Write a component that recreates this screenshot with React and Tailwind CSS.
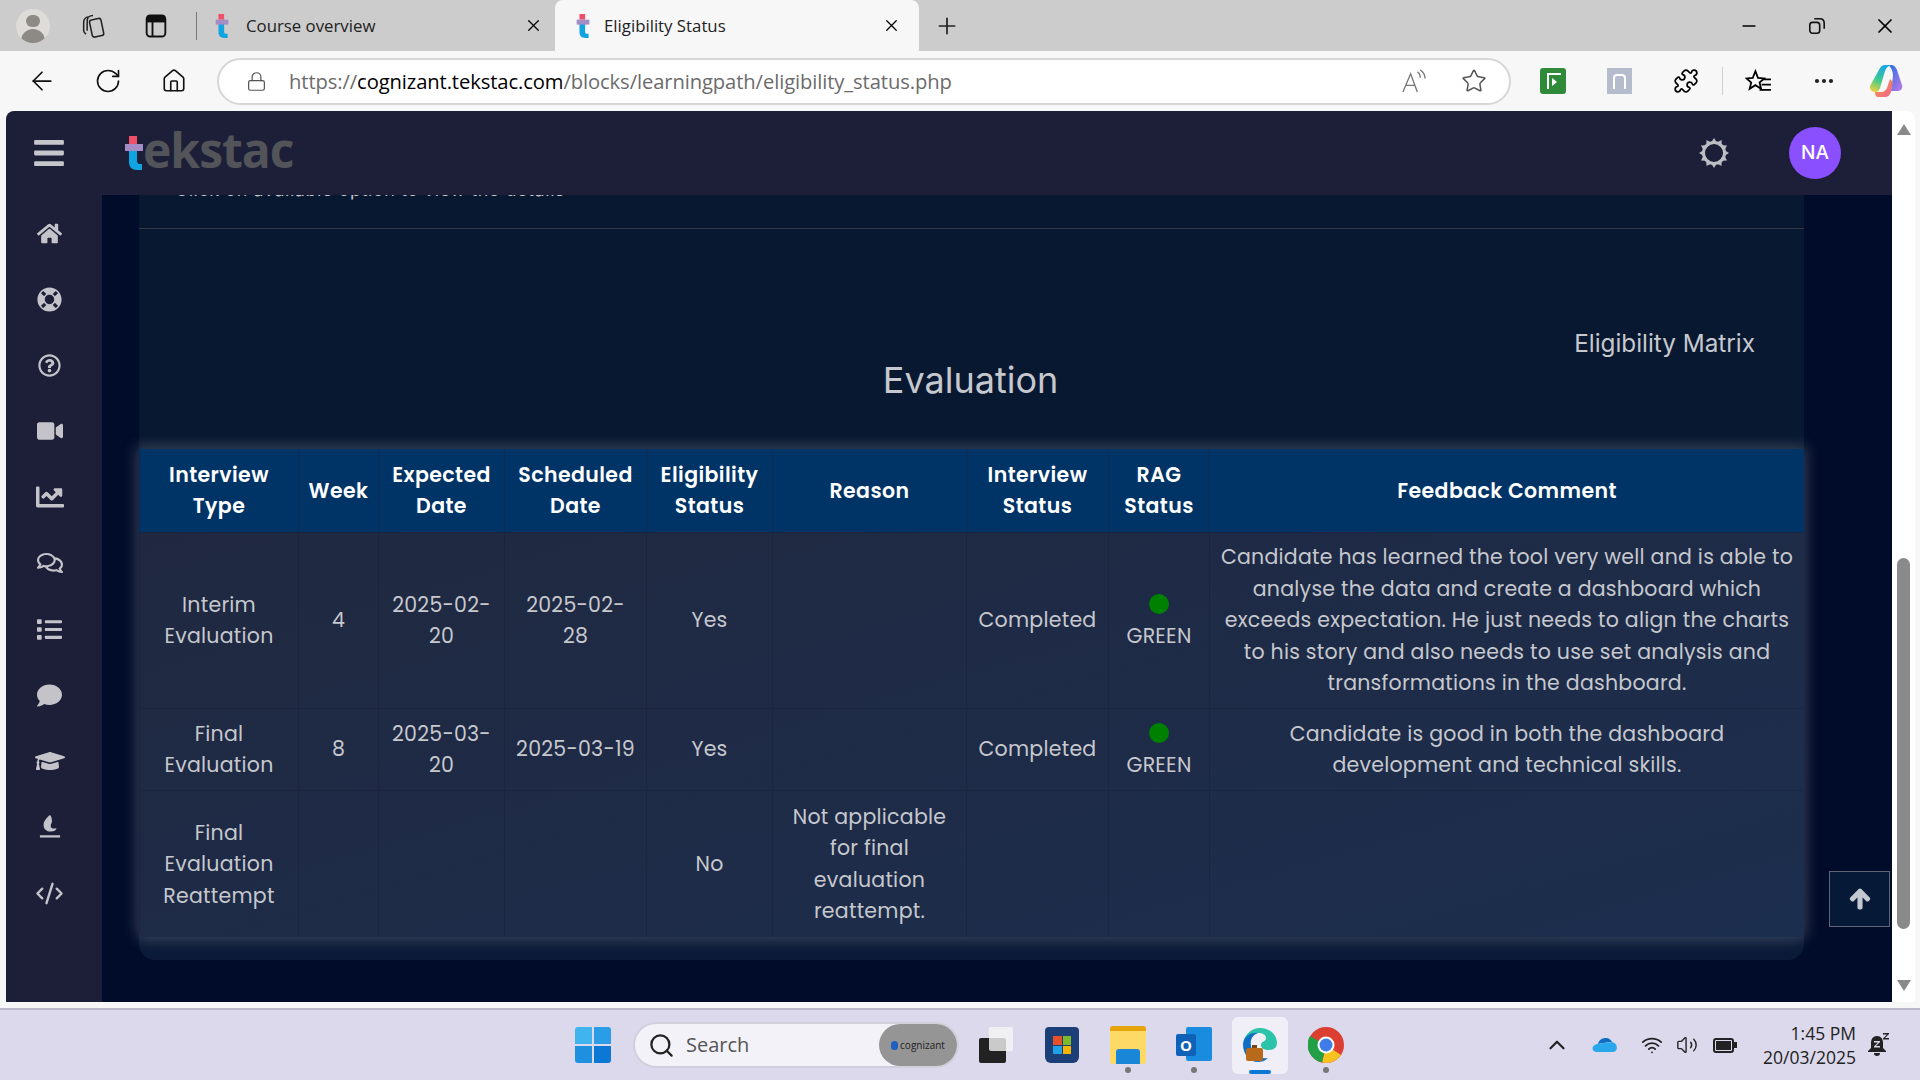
import {
  FaHome,
  FaLifeRing,
  FaRegQuestionCircle,
  FaVideo,
  FaChartLine,
  FaRegComments,
  FaList,
  FaComment,
  FaGraduationCap,
  FaArrowUp,
  FaBars,
} from 'react-icons/fa'
import {
  X,
  Plus,
  ArrowLeft,
  RotateCw,
  Home,
  Lock,
  Star,
  Puzzle,
  MoreHorizontal,
  Minus,
  Search,
  ChevronUp,
  Wifi,
  Volume2,
  CodeXml,
} from 'lucide-react'

const UI_FONT = "font-['Open_Sans',sans-serif]"

function TekMark({ className }) {
  return (
    <svg viewBox="0 0 20 34" className={className}>
      <rect x="5" y="0" width="8" height="8" fill="#ef5068" />
      <path d="M5 13h8v12c0 2 1 3 3 3h2v6h-5c-5 0-8-3-8-8z" fill="#10a5e0" />
      <rect x="1" y="8" width="18" height="7" fill="#a48cc4" />
    </svg>
  )
}

function BrowserTab({ title, active }) {
  return (
    <div
      className={
        active
          ? 'flex h-full w-[364px] items-center rounded-t-lg bg-[#f7f7f7] pl-[20px] pr-[18px]'
          : 'flex h-full w-[358px] items-center pl-[17px] pr-[12px]'
      }
    >
      <TekMark className="h-[24px] w-[16px]" />
      <span className={active ? 'ml-[13px] flex-1 text-[16.800px] text-[#222]' : 'ml-[16px] flex-1 text-[16.800px] text-[#222]'}>
        {title}
      </span>
      <X size={19} strokeWidth={1.6} className="text-black" />
    </div>
  )
}

function TabBar() {
  return (
    <div className={`flex h-[51px] items-center bg-[#cccccc] ${UI_FONT}`}>
      <div className="ml-[16px] flex h-[34px] w-[34px] flex-col items-center overflow-hidden rounded-full bg-[#dedcd8]">
        <div className="mt-[6px] h-[14px] w-[14px] rounded-full bg-[#8d8985]" />
        <div className="mt-[2px] h-[16px] w-[24px] rounded-t-full bg-[#8d8985]" />
      </div>
      <svg viewBox="0 0 24 24" className="ml-[29px] h-[28px] w-[28px]" fill="none" stroke="#222" strokeWidth="1.3">
        <rect x="10" y="6" width="10" height="15" rx="2" transform="rotate(-12 15 13)" />
        <path d="M9 4c-3 0-5 2-5 5v7c0 1 1 2 2 3M12 3c-3 0-5 2-5 5v8" />
      </svg>
      <svg viewBox="0 0 24 24" className="ml-[35px] h-[28px] w-[28px]" fill="none" stroke="#111" strokeWidth="1.6">
        <rect x="4" y="3" width="16" height="18" rx="3" />
        <path d="M4 8h16M9 8v13" />
        <path d="M5 4h14v4H5z" fill="#111" />
      </svg>
      <div className="ml-[26px] h-[28px] w-px bg-[#777]" />
      <BrowserTab title="Course overview" />
      <BrowserTab title="Eligibility Status" active />
      <Plus size={26} strokeWidth={1.6} className="ml-[15px] text-[#222]" />
      <div className="ml-auto flex items-center text-black">
        <Minus size={20} strokeWidth={2} />
        <svg viewBox="0 0 20 20" className="ml-[49px] h-[18px] w-[18px]" fill="none" stroke="#111" strokeWidth="1.8">
          <rect x="2" y="6" width="11" height="12" rx="3" />
          <path d="M7 2h6c3 0 5 2 5 5v6" />
        </svg>
        <X size={24} strokeWidth={1.7} className="ml-[47px] mr-[23px]" />
      </div>
    </div>
  )
}

function CopilotIcon() {
  return (
    <svg viewBox="0 0 34 34" className="h-[34px] w-[34px]">
      <defs>
        <linearGradient id="cpa" x1="0.6" y1="0" x2="0.2" y2="1">
          <stop offset="0" stopColor="#19a7e8" />
          <stop offset="0.55" stopColor="#3ecb8e" />
          <stop offset="1" stopColor="#f0d040" />
        </linearGradient>
        <linearGradient id="cpb" x1="0" y1="0" x2="1" y2="1">
          <stop offset="0" stopColor="#1f6fe8" />
          <stop offset="1" stopColor="#c07ae8" />
        </linearGradient>
        <linearGradient id="cpc" x1="0" y1="0" x2="1" y2="1">
          <stop offset="0" stopColor="#f3a030" />
          <stop offset="1" stopColor="#f0609a" />
        </linearGradient>
      </defs>
      <path d="M19 1h3c3 0 5 2 6 5l5 15c1 3-1 6-4 6h-7l2-15c0-5-2-9-5-11z" fill="url(#cpb)" />
      <path d="M11 4c1-2 3-3 5-3h6c-3 1-5 3-6 6l-5 17c-1 3-3 4-5 4-3 0-6-3-5-6z" fill="url(#cpa)" />
      <path d="M12 28c3 0 5-2 6-4l3-9 3 3-2 10c-1 3-3 5-6 5h-7c-2 0-3-2-3-5z" fill="url(#cpc)" />
    </svg>
  )
}

function Toolbar() {
  return (
    <div className={`flex h-[60px] items-center bg-[#f7f7f7] ${UI_FONT}`}>
      <ArrowLeft size={30} strokeWidth={1.4} className="ml-[27px] text-[#111]" />
      <RotateCw size={28} strokeWidth={1.4} className="ml-[37px] text-[#111]" />
      <Home size={26} strokeWidth={1.5} className="ml-[39px] text-[#111]" />
      <div className="ml-[30px] flex h-[47px] w-[1294px] items-center rounded-full border-2 border-[#d6d6d6] bg-white">
        <Lock size={21} strokeWidth={1.4} className="ml-[27px] text-[#555]" />
        <span className="ml-[22px] text-[20.200px] tracking-[-0.1px] whitespace-nowrap text-[#6b6b6b]">
          https://<span className="text-black">cognizant.tekstac.com</span>/blocks/learningpath/eligibility_status.php
        </span>
        <svg viewBox="0 0 26 26" className="ml-auto h-[25px] w-[25px]" fill="none" stroke="#777" strokeWidth="1.4">
          <path d="M2 24 10 5l7 19M5 17h10M17 3c2 1 3 3 3 6M20 1c3 2 5 5 5 9" />
        </svg>
        <Star size={26} strokeWidth={1.4} className="ml-[35px] mr-[22px] text-[#555]" />
      </div>
      <div className="ml-[29px] flex h-[26px] w-[26px] items-center justify-center rounded-[3px] bg-[#2f8a3a]">
        <svg viewBox="0 0 20 20" className="h-[20px] w-[20px]" fill="none" stroke="#fff" strokeWidth="2">
          <path d="M18 3H5v15" />
          <path d="M9 7v8l5-4z" fill="#fff" stroke="none" />
        </svg>
      </div>
      <div className="ml-[41px] flex h-[26px] w-[25px] items-center justify-center bg-[#b5bdcd]">
        <div className="h-[15px] w-[13px] rounded-t-[4px] border-2 border-b-0 border-white" />
      </div>
      <Puzzle size={26} strokeWidth={1.6} className="ml-[41px] text-black" />
      <div className="ml-[23px] h-[28px] w-px bg-[#cfcfcf]" />
      <svg viewBox="0 0 26 26" className="ml-[22px] h-[27px] w-[27px]" fill="none" stroke="#000" strokeWidth="1.7">
        <path d="M10 3l2.500 6.500 6 .5-4.500 4 1.500 6-5.500-3.500L4.500 20 6 14l-4.500-4 6-.5z" />
        <path d="M17 11h8M16 16h9M14 21h11" />
      </svg>
      <MoreHorizontal size={24} strokeWidth={2.2} className="ml-[40px] text-[#222]" />
      <div className="ml-[33px]">
        <CopilotIcon />
      </div>
    </div>
  )
}

function GearIcon() {
  const teeth = [0, 30, 60, 90, 120, 150, 180, 210, 240, 270, 300, 330]
  return (
    <svg viewBox="0 0 32 32" className="h-[32px] w-[32px]">
      {teeth.map((deg) => (
        <path key={deg} d="M13.5 5 16 1l2.500 4z" fill="#bdbec3" transform={`rotate(${deg} 16 16)`} />
      ))}
      <circle cx="16" cy="16" r="10.500" fill="none" stroke="#bdbec3" strokeWidth="3" />
    </svg>
  )
}

function AppHeader() {
  return (
    <div className="flex h-[84px] shrink-0 items-center bg-[#1c1f37]">
      <FaBars size={34} className="ml-[26px] text-[#c5c5cc]" />
      <div className="ml-[58px] flex items-center">
        <TekMark className="h-[36px] w-[20px]" />
        <span className="mb-[7px] ml-[-1px] font-['Open_Sans',sans-serif] text-[48px] leading-[66px] font-bold tracking-[-1px] text-[#525459]">
          ekstac
        </span>
      </div>
      <div className="ml-auto mr-[51px] flex items-center">
        <GearIcon />
        <div className="ml-[59px] flex h-[52px] w-[52px] items-center justify-center rounded-full bg-[#8a4fff] font-['Inter',sans-serif] text-[19px] font-medium text-white">
          NA
        </div>
      </div>
    </div>
  )
}

function FlameIcon() {
  return (
    <svg viewBox="0 0 24 28" className="h-[26px] w-[22px]" fill="#c3c3c9">
      <path d="M12 1c-4 3-7 7-7 11 0 4 3 7 8 7 4 0 6-2 6-4-2 1-5 1-6-1-1-3 2-5 1-8 0-2-1-4-2-5z" />
      <rect x="1" y="23" width="22" height="2.500" />
    </svg>
  )
}

const sideIcons = [
  <FaHome size={25} />,
  <FaLifeRing size={25} />,
  <FaRegQuestionCircle size={23} />,
  <FaVideo size={26} />,
  <FaChartLine size={28} />,
  <FaRegComments size={26} />,
  <FaList size={25} />,
  <FaComment size={25} />,
  <FaGraduationCap size={30} />,
  <FlameIcon />,
  <CodeXml size={29} strokeWidth={2} />,
]

function Sidebar() {
  return (
    <div className="flex w-[96px] shrink-0 flex-col items-center bg-[#1c1f37] pr-[9px] pt-[5px] text-[#c3c3c9]">
      {sideIcons.map((icon, i) => (
        <div key={i} className="flex h-[66px] w-full items-center justify-center">
          {icon}
        </div>
      ))}
    </div>
  )
}

function Rag() {
  return (
    <>
      <div className="flex h-[31.500px] items-center justify-center">
        <div className="h-[20px] w-[20px] rounded-full bg-[#008000]" />
      </div>
      <div>GREEN</div>
    </>
  )
}

const headers = [
  <>Interview<br />Type</>,
  'Week',
  <>Expected<br />Date</>,
  <>Scheduled<br />Date</>,
  <>Eligibility<br />Status</>,
  'Reason',
  <>Interview<br />Status</>,
  <>RAG<br />Status</>,
  'Feedback Comment',
]

const rows = [
  {
    height: 'h-[176px]',
    cells: [
      <>Interim<br />Evaluation</>,
      '4',
      <>2025-02-<br />20</>,
      <>2025-02-<br />28</>,
      'Yes',
      '',
      'Completed',
      <Rag />,
      <>
        Candidate has learned the tool very well and is able to<br />
        analyse the data and create a dashboard which<br />
        exceeds expectation. He just needs to align the charts<br />
        to his story and also needs to use set analysis and<br />
        transformations in the dashboard.
      </>,
    ],
  },
  {
    height: 'h-[82px]',
    cells: [
      <>Final<br />Evaluation</>,
      '8',
      <>2025-03-<br />20</>,
      '2025-03-19',
      'Yes',
      '',
      'Completed',
      <Rag />,
      <>
        Candidate is good in both the dashboard<br />
        development and technical skills.
      </>,
    ],
  },
  {
    height: 'h-[147px]',
    cells: [
      <>Final<br />Evaluation<br />Reattempt</>,
      '',
      '',
      '',
      'No',
      <>Not applicable<br />for final<br />evaluation<br />reattempt.</>,
      '',
      '',
      '',
    ],
  },
]

function EvaluationTable() {
  return (
    <div className="overflow-hidden rounded-b-[6px] bg-gradient-to-br from-[#20283f] to-[#1c2e4e] shadow-[0_0_14px_3px_rgba(170,170,175,0.3)]">
      <table className="w-full table-fixed border-collapse text-center font-['Poppins','Inter',sans-serif] text-[20.500px] leading-[31.500px] tracking-[0.012em] whitespace-nowrap">
        <colgroup>
          <col className="w-[159px]" />
          <col className="w-[80px]" />
          <col className="w-[126px]" />
          <col className="w-[142px]" />
          <col className="w-[126px]" />
          <col className="w-[194px]" />
          <col className="w-[142px]" />
          <col className="w-[101px]" />
          <col className="w-[595px]" />
        </colgroup>
        <thead>
          <tr className="h-[83px] bg-[#003366] text-white">
            {headers.map((h, i) => (
              <th key={i} className="border-x border-[#0b2b55] p-0 font-semibold tracking-[0.02em]">
                {h}
              </th>
            ))}
          </tr>
        </thead>
        <tbody className="text-[#c6c8ce]">
          {rows.map((row, r) => (
            <tr key={r} className={`${row.height} border-t border-black/10`}>
              {row.cells.map((cell, i) => (
                <td key={i} className="border-x border-black/10 p-0 align-middle">
                  {cell}
                </td>
              ))}
            </tr>
          ))}
        </tbody>
      </table>
    </div>
  )
}

function MainArea() {
  return (
    <div className="relative flex-1 overflow-hidden bg-[#000c2a] pl-[37px] pr-[88px]">
      <div className="h-[765px] rounded-b-[16px] bg-gradient-to-b from-[#081831] via-[#081831] to-[#0a1a38]">
        <div className="flex h-[34px] border-b border-[#333a45] pl-[36px]">
          <div className="mt-[-18px] h-[26px] font-['Inter',sans-serif] text-[18px] leading-[26px] tracking-[0.03em] text-[#c6c8ce]">
            Click on available option to view the details
          </div>
        </div>
        <div className="pr-[49px] pt-[100px] text-right font-['Inter',sans-serif] text-[24.300px] leading-[28px] text-[#c6c8ce]">
          Eligibility Matrix
        </div>
        <div className="mb-[46px] h-[46px] pr-[2px] text-center font-['Inter',sans-serif] text-[36px] leading-[46px] text-[#c6c8ce]">
          Evaluation
        </div>
        <EvaluationTable />
      </div>
      <div className="absolute right-[2px] top-[676px] flex h-[56px] w-[61px] items-center justify-center border border-[#5e6570] bg-[#061a38]">
        <FaArrowUp size={22} stroke="currentColor" strokeWidth={40} className="text-[#c3c7cf]" />
      </div>
    </div>
  )
}

function Scrollbar() {
  return (
    <div className="flex w-[23px] shrink-0 flex-col items-center rounded-tr-lg bg-white">
      <div className="mt-[13px] h-0 w-0 border-x-[7px] border-b-[11px] border-x-transparent border-b-[#8a8a8a]" />
      <div className="mt-[423px] h-[371px] w-[13px] rounded-full bg-[#8a8a8a]" />
      <div className="mt-[51px] h-0 w-0 border-x-[7px] border-t-[11px] border-x-transparent border-t-[#8a8a8a]" />
    </div>
  )
}

function TaskIcon({ children, dot, active }) {
  return (
    <div className="relative flex h-[57px] w-[66px] items-center justify-center">
      {active && <div className="absolute inset-x-[5px] inset-y-0 rounded-md bg-[#f0eff7]" />}
      <div className="relative">{children}</div>
      {dot && <div className="absolute bottom-[1px] h-[6px] w-[6px] rounded-full bg-[#777]" />}
      {active && <div className="absolute bottom-0 h-[4px] w-[22px] rounded-full bg-[#0a78d4]" />}
    </div>
  )
}

function StartIcon() {
  return (
    <div className="grid h-[36px] w-[36px] grid-cols-2 gap-[2px]">
      <div className="rounded-tl-[3px] bg-[#3fb4ef]" />
      <div className="rounded-tr-[3px] bg-[#2a9de6]" />
      <div className="rounded-bl-[3px] bg-[#1f8fe0]" />
      <div className="rounded-br-[3px] bg-[#0a78d4]" />
    </div>
  )
}

function Taskbar() {
  return (
    <div className={`mt-[6px] flex h-[72px] items-center border-t-2 border-[#bbb8cb] bg-[#dbd9eb] ${UI_FONT}`}>
      <div className="ml-[560px] flex w-[66px] justify-center">
        <StartIcon />
      </div>
      <div className="ml-[7px] flex h-[46px] w-[326px] items-center rounded-full border-2 border-[#d0cfdc] bg-[#f3f2f9]">
        <Search size={27} strokeWidth={2} className="ml-[13px] text-[#222]" />
        <span className="ml-[11px] text-[20px] text-[#555]">Search</span>
        <div className="ml-auto flex h-[42px] w-[78px] items-center justify-center rounded-full bg-[#959595] text-[10px] text-[#222]">
          <span className="mr-[2px] h-[9px] w-[7px] rounded-sm bg-[#1f5fbf]" />
          cognizant
        </div>
      </div>
      <div className="ml-[4px] flex items-center">
        <TaskIcon>
          <div className="relative h-[36px] w-[34px]">
            <div className="absolute bottom-0 left-0 h-[25px] w-[27px] rounded-[2px] bg-[#222]" />
            <div className="absolute right-0 top-0 h-[24px] w-[24px] rounded-[2px] bg-[#f5f5f5]/80" />
          </div>
        </TaskIcon>
        <TaskIcon>
          <div className="flex h-[36px] w-[34px] items-center justify-center rounded-b-md rounded-t-sm bg-[#1d3f77]">
            <div className="grid h-[18px] w-[18px] grid-cols-2 gap-[1px]">
              <div className="bg-[#e8502a]" />
              <div className="bg-[#7db928]" />
              <div className="bg-[#22a0e6]" />
              <div className="bg-[#f5b400]" />
            </div>
          </div>
        </TaskIcon>
        <TaskIcon dot>
          <div className="flex h-[38px] w-[36px] flex-col justify-end rounded-[3px] border-t-[5px] border-[#e5a50a] bg-[#ffd966]">
            <div className="mx-auto h-[15px] w-[24px] rounded-t-[3px] bg-[#1a86d8]" />
          </div>
        </TaskIcon>
        <TaskIcon dot>
          <div className="relative h-[36px] w-[36px]">
            <div className="absolute right-0 top-0 h-[34px] w-[26px] rounded-[2px] bg-[#1a8ce0]" />
            <div className="absolute left-0 top-[7px] flex h-[22px] w-[20px] items-center justify-center rounded-[2px] bg-[#0f62b8] text-[15px] font-bold text-white">
              O
            </div>
          </div>
        </TaskIcon>
        <TaskIcon active>
          <svg viewBox="0 0 36 36" className="h-[36px] w-[36px]">
            <path d="M18 1c10 0 17 7 17 15 0 5-4 7-8 7-5 0-8-2-8-5 0-4 5-3 5-7 0-3-3-5-8-5C8 6 2 11 1 17 2 8 9 1 18 1z" fill="#2cc4a8" />
            <path d="M1 17C2 9 9 5 16 6c-6 2-8 7-7 13 1 7 8 14 17 12-3 3-7 4-10 4C8 35 1 28 1 17z" fill="#0f6fc4" />
            <rect x="4" y="21" width="17" height="13" rx="2" fill="#b8691a" />
            <rect x="10" y="18" width="5" height="3" fill="#7a4410" />
          </svg>
        </TaskIcon>
        <TaskIcon dot>
          <svg viewBox="0 0 36 36" className="h-[36px] w-[36px]">
            <circle cx="18" cy="18" r="18" fill="#dc3e31" />
            <path d="M18 18 33 28A18 18 0 0 1 14 35.500z" fill="#f7c11e" />
            <path d="M18 18 14 35.500A18 18 0 0 1 2 9z" fill="#23a047" />
            <circle cx="18" cy="18" r="8.500" fill="#fff" />
            <circle cx="18" cy="18" r="6.500" fill="#3f7ce8" />
          </svg>
        </TaskIcon>
      </div>
      <div className="ml-auto flex items-center">
        <ChevronUp size={26} strokeWidth={2} className="text-[#222]" />
        <svg viewBox="0 0 26 16" className="ml-[22px] h-[18px] w-[26px]">
          <path d="M6 7c1-4 4-6 8-6 3 0 5 2 6 4-5 0-9 1-14 2z" fill="#0f6cc0" />
          <path d="M5 15c-6 0-6-7 0-8l15-2c6 1 7 10 0 10z" fill="#28a8ea" />
        </svg>
        <Wifi size={22} strokeWidth={2} className="ml-[23px] text-[#222]" />
        <Volume2 size={22} strokeWidth={1.5} className="ml-[13px] text-[#222]" />
        <div className="ml-[15px] flex items-center">
          <div className="flex h-[15px] w-[21px] items-center rounded-[3px] border-2 border-[#222] p-px">
            <div className="h-full w-full bg-[#222]" />
          </div>
          <div className="h-[6px] w-[3px] bg-[#222]" />
        </div>
        <div className="ml-[26px] text-right text-[17.500px] leading-[24px] text-[#222]">
          <div>1:45 PM</div>
          <div>20/03/2025</div>
        </div>
        <svg viewBox="0 0 24 24" className="ml-[10px] mr-[30px] h-[24px] w-[24px]" fill="#222">
          <path d="M11 3c-4 0-6 3-6 7v5l-3 3v1h18v-1l-3-3v-5c0-4-2-7-6-7z" />
          <path d="M8 20h6c0 2-1 3-3 3s-3-1-3-3z" />
          <path d="M8 8h6v1l-4 4h4v1.500H8v-1l4-4H8z" fill="#dbd9eb" />
          <path d="M17 0h6v1l-4 4h4v1.500h-6v-1l4-4h-4z" />
        </svg>
      </div>
    </div>
  )
}

export default function App() {
  return (
    <div className="flex h-screen w-full flex-col overflow-hidden bg-[#f7f7f7]">
      <TabBar />
      <Toolbar />
      <div className="ml-[6px] mr-[5px] flex h-[891px] shrink-0 overflow-hidden rounded-t-lg">
        <div className="flex min-w-0 flex-1 flex-col">
          <AppHeader />
          <div className="flex min-h-0 flex-1">
            <Sidebar />
            <MainArea />
          </div>
        </div>
        <Scrollbar />
      </div>
      <Taskbar />
    </div>
  )
}
